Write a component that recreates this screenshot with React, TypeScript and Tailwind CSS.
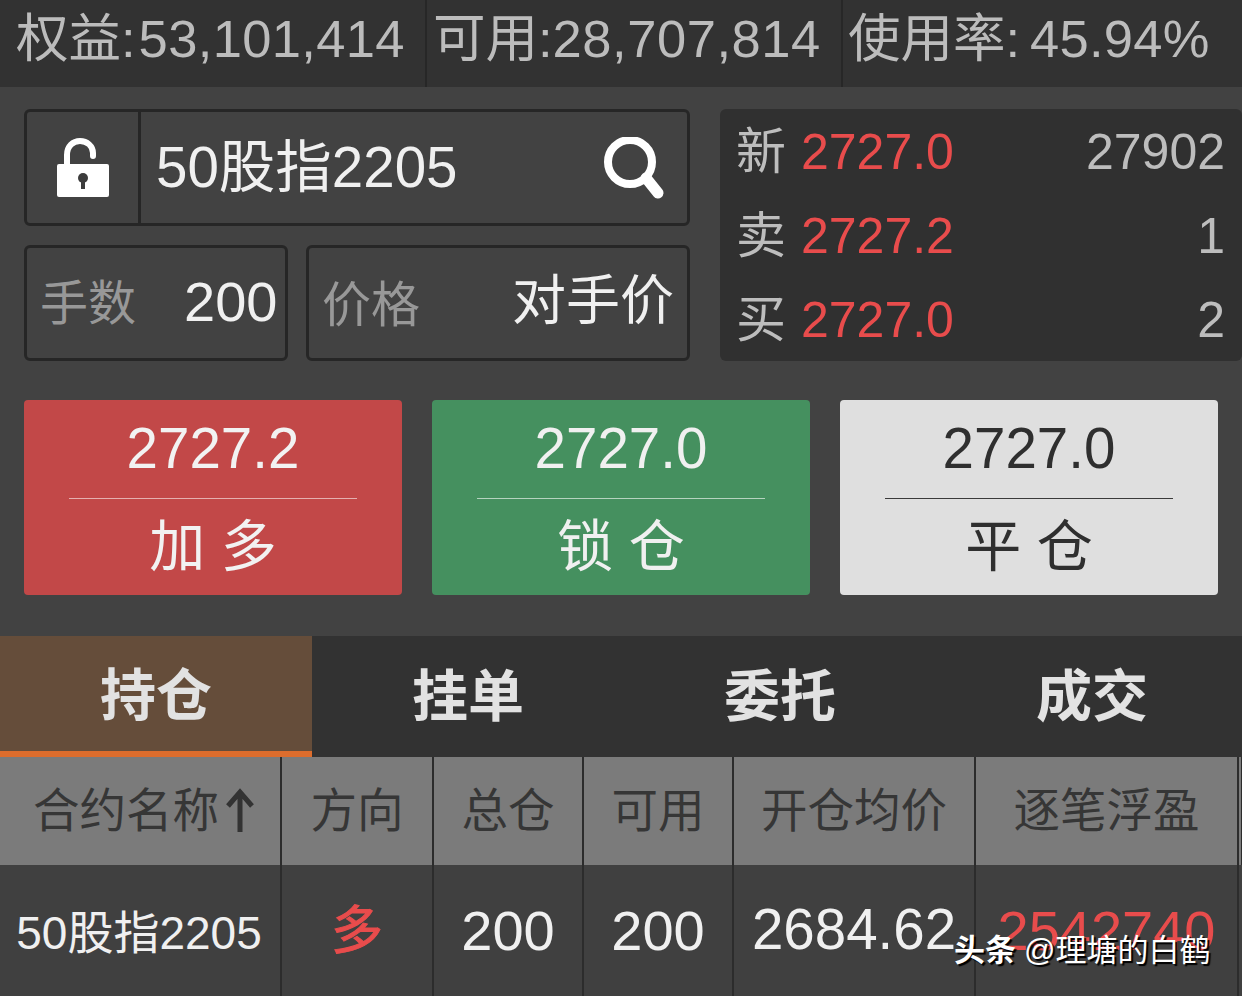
import React from "react";

const font = { fontFamily: '"Liberation Sans","Noto Sans CJK SC",sans-serif' };

function Action({ price, label, bg, text, line }: { price: string; label: string; bg: string; text: string; line: string }) {
  return (
    <div className={`w-[378px] h-[195px] rounded-[4px] flex flex-col items-center ${bg} ${text}`}>
      <div className="h-[99px] w-[288px] flex items-center justify-center text-[56.5px] leading-none border-b" style={{ borderColor: line }}>{price}</div>
      <div className="flex-1 flex items-center justify-center text-[56px] leading-none whitespace-pre">{label}</div>
    </div>
  );
}

function Quote({ k, p, v }: { k: string; p: string; v: string }) {
  return (
    <div className="h-[84px] flex items-center text-[50px] leading-none text-[#bdbdbd] pt-[2px]">
      <span className="w-[65px]">{k}</span>
      <span className="text-[#e84c4c]">{p}</span>
      <span className="ml-auto">{v}</span>
    </div>
  );
}

const cols = [282, 152, 150, 150, 242, 263, 4];
const heads = ["合约名称", "方向", "总仓", "可用", "开仓均价", "逐笔浮盈", ""];

export default function App() {
  return (
    <div className="w-[1242px] h-[996px] overflow-hidden bg-[#424242] relative" style={font}>
      <div className="h-[87px] bg-[#323232] flex text-[#bcbcbc] leading-none whitespace-nowrap">
        <div className="w-[427px] border-r-2 border-[#272727] pl-[16px] pt-[13px] text-[52.5px]">权益:<span className="ml-[3px] tracking-[0.35px]">53,101,414</span></div>
        <div className="w-[416px] border-r-2 border-[#272727] pl-[6px] pt-[13px] text-[52.5px]">可用:<span className="tracking-[0.55px]">28,707,814</span></div>
        <div className="flex-1 pl-[5px] pt-[13px] text-[52.5px]">使用率:<span className="ml-[-5px] tracking-[0.3px]"> 45.94%</span></div>
      </div>

      <div className="h-[549px] pt-[22px] px-[24px]">
        <div className="flex h-[252px]">
          <div className="w-[666px] flex flex-col justify-between">
            <div className="h-[117px] border-[3px] border-[#262626] rounded-[6px] flex items-center">
              <div className="w-[114px] h-full border-r-[3px] border-[#262626] flex items-center justify-center">
                <svg width="54" height="60" viewBox="0 0 54 60">
                  <path d="M11 31V17C11 8 17 3 24 3s13 5 13 12v3" fill="none" stroke="#fff" strokeWidth="6" strokeLinecap="round" />
                  <rect x="1" y="26" width="52" height="33" rx="2" fill="#fff" />
                  <circle cx="27" cy="40" r="5" fill="#3c3c3c" />
                  <rect x="25" y="41" width="4" height="10" fill="#3c3c3c" />
                </svg>
              </div>
              <span className="ml-[15px] mt-[2px] text-[56.5px] leading-none text-[#f0f0f0]">50股指2205</span>
              <svg className="ml-auto mr-[22px]" width="62" height="62" viewBox="0 0 62 62">
                <circle cx="27" cy="25" r="22" fill="none" stroke="#fff" strokeWidth="8" />
                <path d="M43 41L55 56" stroke="#fff" strokeWidth="11" strokeLinecap="round" />
              </svg>
            </div>
            <div className="flex justify-between">
              <div className="w-[264px] h-[116px] border-[3px] border-[#262626] rounded-[6px] flex items-center pl-[13px]">
                <span className="text-[48px] leading-none text-[#989898] mt-[2px]">手数</span>
                <span className="ml-[48px] text-[56px] leading-none text-[#f0f0f0] mb-[2px]">200</span>
              </div>
              <div className="w-[384px] h-[116px] border-[3px] border-[#262626] rounded-[6px] flex items-center pl-[13px] pr-[13px]">
                <span className="text-[49px] leading-none text-[#989898] mt-[4px]">价格</span>
                <span className="ml-auto text-[54px] leading-none text-[#f0f0f0] mb-[4px]">对手价</span>
              </div>
            </div>
          </div>
          <div className="ml-[30px] w-[522px] mr-[-24px] shrink-0 h-[252px] bg-[#303030] rounded-[6px] pl-[16px] pr-[17px] flex flex-col justify-center">
            <Quote k="新" p="2727.0" v="27902" />
            <Quote k="卖" p="2727.2" v="1" />
            <Quote k="买" p="2727.0" v="2" />
          </div>
        </div>
        <div className="flex gap-[30px] mt-[39px]">
          <Action price="2727.2" label={"加 多"} bg="bg-[#c24848]" text="text-[#f2f2f2]" line="#e5b0b0" />
          <Action price="2727.0" label={"锁 仓"} bg="bg-[#45905f]" text="text-[#f0f0f0]" line="#b5d3bf" />
          <Action price="2727.0" label={"平 仓"} bg="bg-[#dfdfdf]" text="text-[#2f2f2f]" line="#3a3a3a" />
        </div>
      </div>

      <div className="h-[121px] bg-[#323232] flex text-[56px] font-bold text-[#e2e2e2] leading-none overflow-hidden">
        <div className="w-[312px] shrink-0 bg-[#654d3a] border-b-[6px] border-[#dd6d2d] flex items-center justify-center pt-[4px]">持仓</div>
        <div className="w-[312px] shrink-0 flex items-center justify-center">挂单</div>
        <div className="w-[312px] shrink-0 flex items-center justify-center">委托</div>
        <div className="w-[312px] shrink-0 flex items-center justify-center">成交</div>
      </div>

      <div className="h-[108px] bg-[#7b7b7b] flex text-[46.5px] leading-none text-[#363636]">
        {heads.map((h, i) => (
          <div key={i} className={`flex items-center justify-center border-r-2 border-[#2c2c2c] shrink-0 ${i === 0 ? "pl-[8px]" : ""}`} style={{ width: cols[i] }}>
            {h}
            {i === 0 && (
              <svg width="30" height="46" viewBox="0 0 30 46" className="ml-[6px]">
                <path d="M15 44V4M3 18L15 4l12 14" fill="none" stroke="#333" strokeWidth="5" />
              </svg>
            )}
          </div>
        ))}
      </div>

      <div className="h-[131px] bg-[#404040] flex leading-none text-[#f0f0f0] whitespace-nowrap">
        <div className="w-[282px] shrink-0 border-r-2 border-[#2c2c2c] flex items-center justify-center text-[46px] pt-[4px] pr-[2px]">50股指2205</div>
        <div className="w-[152px] shrink-0 border-r-2 border-[#2c2c2c] flex items-center justify-center text-[52px] text-[#e84c4c] [-webkit-text-stroke:1px_#e84c4c]">多</div>
        <div className="w-[150px] shrink-0 border-r-2 border-[#2c2c2c] flex items-center justify-center text-[56px]">200</div>
        <div className="w-[150px] shrink-0 border-r-2 border-[#2c2c2c] flex items-center justify-center text-[56px]">200</div>
        <div className="w-[242px] shrink-0 border-r-2 border-[#2c2c2c] flex items-center justify-center text-[56.5px]">2684.62</div>
        <div className="w-[263px] shrink-0 border-r-2 border-[#2c2c2c] flex items-center justify-center text-[56px] text-[#e84c4c]">2542740</div>
      </div>

      <div className="absolute left-[954px] top-[935px] flex items-center text-[31px] leading-none text-white whitespace-nowrap [text-shadow:2px_2px_1px_#000]">
        <span className="font-bold">头条</span>
        <span className="ml-[8px]">@理塘的白鹤</span>
      </div>
    </div>
  );
}
